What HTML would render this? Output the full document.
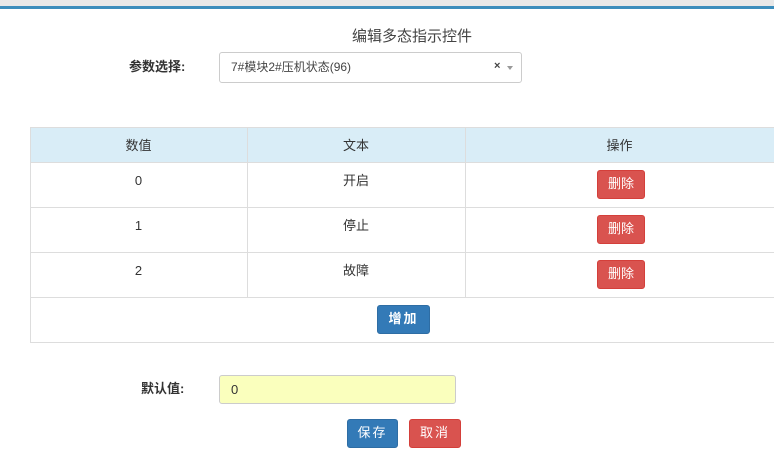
<html><head><style>
body{margin:0;width:774px;height:455px;background:#fff;font-family:"Liberation Sans","Noto Sans CJK SC",sans-serif;font-size:13px;color:#333;position:relative;overflow:hidden}
.a{position:absolute}
.btn{position:absolute;color:#fff;border-radius:3px;font-size:13px;text-align:center;box-sizing:border-box}
.red{background:#d9534f;border:1px solid #d43f3a}
.blue{background:#337ab7;border:1px solid #2e6da4;font-weight:bold;letter-spacing:2px}
.c{position:absolute;text-align:center}
.h{position:absolute;height:1px;background:#ddd;left:30px;width:744px}
.v{position:absolute;width:1px;background:#ddd}
</style></head><body>
<div class="a" style="left:0;top:0;width:774px;height:6px;background:#e8e8e8"></div>
<div class="a" style="left:0;top:6px;width:774px;height:3px;background:#3c8dbc"></div>
<div class="a" style="left:352px;top:25px;font-size:15px;color:#444">编辑多态指示控件</div>
<div class="a" style="left:129px;top:56px;font-weight:bold">参数选择:</div>
<div class="a" style="left:219px;top:52px;width:301px;height:29px;border:1px solid #ccc;border-radius:3px"></div>
<div class="a" style="left:231px;top:58px;font-size:12px;color:#444">7#模块2#压机状态(96)</div>
<div class="a" style="left:494px;top:60px;font-size:11px;font-weight:bold;color:#444">×</div>
<div class="a" style="left:507px;top:66px;width:0;height:0;border-left:3px solid transparent;border-right:3px solid transparent;border-top:4px solid #999"></div>
<div class="a" style="left:30px;top:127px;width:744px;height:35px;background:#d9edf7"></div>
<div class="h" style="top:127px"></div><div class="h" style="top:162px"></div><div class="h" style="top:207px"></div><div class="h" style="top:252px"></div><div class="h" style="top:297px"></div><div class="h" style="top:342px"></div>
<div class="v" style="left:30px;top:127px;height:216px"></div>
<div class="v" style="left:247px;top:127px;height:170px"></div>
<div class="v" style="left:465px;top:127px;height:170px"></div>
<div class="c" style="left:30px;width:217px;top:135px">数值</div>
<div class="c" style="left:247px;width:218px;top:135px">文本</div>
<div class="c" style="left:465px;width:309px;top:135px">操作</div>
<div class="c" style="left:30px;width:217px;top:173px">0</div><div class="c" style="left:247px;width:218px;top:170px">开启</div>
<div class="c" style="left:30px;width:217px;top:218px">1</div><div class="c" style="left:247px;width:218px;top:215px">停止</div>
<div class="c" style="left:30px;width:217px;top:263px">2</div><div class="c" style="left:247px;width:218px;top:260px">故障</div>
<div class="btn red" style="left:597px;top:170px;width:48px;height:29px;line-height:26px">删除</div>
<div class="btn red" style="left:597px;top:215px;width:48px;height:29px;line-height:26px">删除</div>
<div class="btn red" style="left:597px;top:260px;width:48px;height:29px;line-height:26px">删除</div>
<div class="btn blue" style="left:377px;top:305px;width:53px;height:29px;line-height:26px">增加</div>
<div class="a" style="left:141px;top:378px;font-weight:bold">默认值:</div>
<div class="a" style="left:219px;top:375px;width:237px;height:29px;box-sizing:border-box;border:1px solid #ccc;border-radius:3px;background:#faffbd"></div>
<div class="a" style="left:231px;top:382px">0</div>
<div class="btn blue" style="left:347px;top:419px;width:51px;height:29px;line-height:26px;font-weight:normal">保存</div>
<div class="btn red" style="left:409px;top:419px;width:52px;height:29px;line-height:26px;letter-spacing:2px">取消</div>
</body></html>
